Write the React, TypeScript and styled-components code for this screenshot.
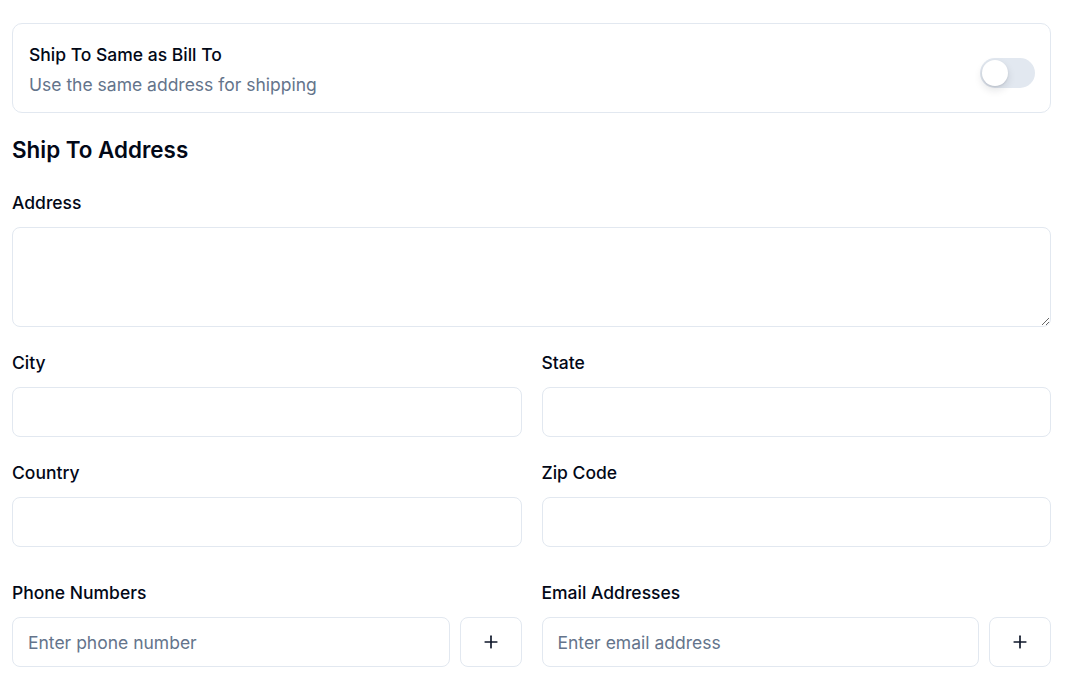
import React from "react";
import styled, { createGlobalStyle } from "styled-components";
import { Plus } from "lucide-react";

const Global = createGlobalStyle`
  * { box-sizing: border-box; }
  html, body { margin: 0; padding: 0; background: #ffffff; }
  body { font-family: Inter, "Noto Sans", sans-serif; color: #020817; }
`;

const Page = styled.div`
  padding: 23px 21px 0 12px;
  display: flex;
  flex-direction: column;
`;

const ToggleCard = styled.div`
  display: flex;
  align-items: center;
  justify-content: space-between;
  border: 1px solid #e2e8f0;
  border-radius: 10px;
  height: 90px;
  padding: 0 15px 0 16px;
`;

const ToggleText = styled.div`
  display: flex;
  flex-direction: column;
  gap: 6px;
  margin-top: 4px;
`;

const CardTitle = styled.div`
  font-size: 17.5px;
  line-height: 24px;
  font-weight: 500;
  color: #020817;
`;

const CardHint = styled.div`
  font-size: 17.5px;
  line-height: 24px;
  color: #64748b;
`;

const Switch = styled.button<{ $on?: boolean }>`
  position: relative;
  width: 55px;
  height: 30px;
  border: none;
  padding: 0;
  border-radius: 999px;
  background: ${(p) => (p.$on ? "#0f172a" : "#e2e8f0")};
  margin-top: 9px;
  cursor: pointer;
`;

const Thumb = styled.span<{ $on?: boolean }>`
  position: absolute;
  top: 2px;
  left: ${(p) => (p.$on ? "27px" : "2px")};
  width: 26px;
  height: 26px;
  border-radius: 50%;
  background: #ffffff;
  box-shadow: 0 4px 8px rgba(15, 23, 42, 0.12), 0 1px 2px rgba(15, 23, 42, 0.1);
`;

const SectionTitle = styled.h2`
  margin: 23px 0 0;
  font-size: 22.4px;
  line-height: 28px;
  font-weight: 600;
  color: #020817;
`;

const Field = styled.div<{ $mt?: number }>`
  display: flex;
  flex-direction: column;
  min-width: 0;
  margin-top: ${(p) => p.$mt ?? 0}px;
`;

const Label = styled.label`
  font-size: 17.5px;
  line-height: 24px;
  font-weight: 500;
  color: #020817;
  padding-top: 1px;
  margin-bottom: 12px;
`;

const TextArea = styled.textarea`
  height: 100px;
  border: 1px solid #e2e8f0;
  border-radius: 8px;
  resize: vertical;
  font-family: inherit;
  font-size: 17.5px;
  padding: 12px 16px;
  outline: none;
`;

const Input = styled.input`
  height: 50px;
  width: 100%;
  min-width: 0;
  border: 1px solid #e2e8f0;
  border-radius: 8px;
  font-family: inherit;
  font-size: 17.5px;
  padding: 0 15px;
  color: #020817;
  outline: none;
  &::placeholder { color: #64748b; }
`;

const Grid = styled.div<{ $mt?: number }>`
  display: grid;
  grid-template-columns: 1fr 1fr;
  column-gap: 20px;
  margin-top: ${(p) => p.$mt ?? 0}px;
`;

const AddRow = styled.div`
  display: flex;
  gap: 10px;
`;

const AddButton = styled.button`
  flex: 0 0 62px;
  height: 50px;
  border: 1px solid #e2e8f0;
  border-radius: 8px;
  background: #ffffff;
  color: #0f172a;
  display: flex;
  align-items: center;
  justify-content: center;
  cursor: pointer;
  padding: 0;
`;

export default function App() {
  return (
    <>
      <Global />
      <Page>
        <ToggleCard>
          <ToggleText>
            <CardTitle>Ship To Same as Bill To</CardTitle>
            <CardHint>Use the same address for shipping</CardHint>
          </ToggleText>
          <Switch type="button" role="switch" aria-checked={false}>
            <Thumb />
          </Switch>
        </ToggleCard>

        <SectionTitle>Ship To Address</SectionTitle>

        <Field $mt={26}>
          <Label>Address</Label>
          <TextArea />
        </Field>

        <Grid $mt={23}>
          <Field>
            <Label>City</Label>
            <Input />
          </Field>
          <Field>
            <Label>State</Label>
            <Input />
          </Field>
        </Grid>

        <Grid $mt={23}>
          <Field>
            <Label>Country</Label>
            <Input />
          </Field>
          <Field>
            <Label>Zip Code</Label>
            <Input />
          </Field>
        </Grid>

        <Grid $mt={33}>
          <Field>
            <Label>Phone Numbers</Label>
            <AddRow>
              <Input placeholder="Enter phone number" />
              <AddButton type="button" aria-label="Add phone">
                <Plus size={20} strokeWidth={2} />
              </AddButton>
            </AddRow>
          </Field>
          <Field>
            <Label>Email Addresses</Label>
            <AddRow>
              <Input placeholder="Enter email address" />
              <AddButton type="button" aria-label="Add email">
                <Plus size={20} strokeWidth={2} />
              </AddButton>
            </AddRow>
          </Field>
        </Grid>
      </Page>
    </>
  );
}
